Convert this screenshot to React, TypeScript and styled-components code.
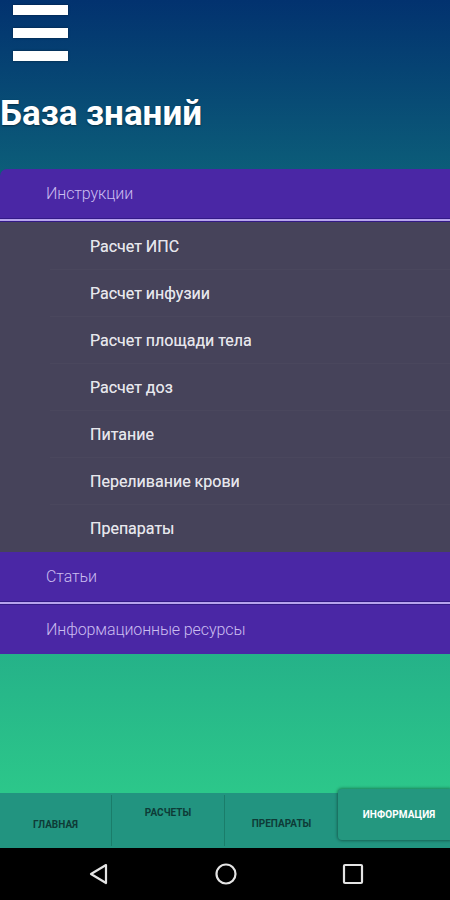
import React from "react";
import styled, { createGlobalStyle } from "styled-components";

const Global = createGlobalStyle`
  html, body { margin: 0; padding: 0; }
  body { font-family: Roboto, "Noto Sans", Arial, sans-serif; background: #000; }
  * { box-sizing: border-box; }
`;

const Screen = styled.div`
  width: 450px;
  height: 900px;
  display: flex;
  flex-direction: column;
  overflow: hidden;
  background: linear-gradient(180deg, #02326f 0%, #0c5d79 19%, #1d9987 55%, #2cc78a 88%, #2cc98a 100%);
`;

const Content = styled.div`
  flex: 1;
  display: flex;
  flex-direction: column;
  padding-top: 5px;
`;

const MenuButton = styled.div`
  margin-left: 13px;
  width: 55px;
  display: flex;
  flex-direction: column;
  gap: 13px;
`;

const MenuBar = styled.div`
  height: 10px;
  background: #ffffff;
  box-shadow: 0 0 2px rgba(0, 0, 0, 0.5);
`;

const Title = styled.h1`
  margin: 33px 0 0 0;
  font-family: Roboto, Arial, sans-serif;
  font-weight: 700;
  font-size: 35px;
  line-height: 40px;
  color: #ffffff;
  text-shadow: 0 1px 2px rgba(0, 0, 0, 0.45);
`;

const Accordion = styled.div`
  margin-top: 35px;
  display: flex;
  flex-direction: column;
  border-top-left-radius: 7px;
  overflow: hidden;
`;

const Header = styled.div`
  height: 49px;
  display: flex;
  align-items: center;
  padding-left: 46px;
  background: #4a27a5;
  color: #cbbdf0;
  font-family: Roboto, Arial, sans-serif;
  font-weight: 300;
  font-size: 16px;
  letter-spacing: -0.1px;
`;

const Divider = styled.div`
  height: 4px;
  background: linear-gradient(180deg, #331a86 0 25%, #b7a3ee 25% 75%, #331a86 75% 100%);
`;

const Panel = styled.div`
  background: #46435a;
  display: flex;
  flex-direction: column;
  padding-top: 1px;
`;

const Item = styled.div<{ $last?: boolean }>`
  height: 47px;
  margin-left: 50px;
  padding-left: 40px;
  display: flex;
  align-items: center;
  color: #e6e6ec;
  font-family: Roboto, Arial, sans-serif;
  font-weight: 400;
  font-size: 16px;
  text-shadow: 0 0 0.4px rgba(255, 255, 255, 0.6);
  border-bottom: 1px solid ${(p) => (p.$last ? "transparent" : "rgba(255,255,255,0.025)")};
`;

const TabBar = styled.div`
  position: relative;
  height: 55px;
  background: #229480;
  display: grid;
  grid-template-columns: 112px 113px 113px 112px;
  margin-top: 4px;
`;

const Tab = styled.div<{ $offset: number; $divider?: boolean }>`
  display: flex;
  justify-content: center;
  align-items: flex-start;
  padding-top: ${(p) => p.$offset}px;
  font-family: Roboto, Arial, sans-serif;
  font-weight: 700;
  font-size: 10px;
  color: #0e3b37;
  margin: 2px 0;
  border-right: ${(p) => (p.$divider ? "1px solid #1a7d6a" : "none")};
`;

const ActiveTab = styled.div`
  margin-top: -4px;
  margin-bottom: 8px;
  border-radius: 4px 0 0 4px;
  background: #24977f;
  box-shadow: 0 0 3px 1px rgba(0, 0, 0, 0.35);
  display: flex;
  justify-content: center;
  align-items: center;
  padding-left: 10px;
  font-family: Roboto, Arial, sans-serif;
  font-weight: 700;
  font-size: 10px;
  color: #ffffff;
  letter-spacing: 0.1px;
`;

const NavBar = styled.div`
  height: 52px;
  background: #000000;
  display: grid;
  grid-template-columns: 196px 60px 194px;
  align-items: center;
`;

const NavSlot = styled.div<{ $align: string }>`
  display: flex;
  justify-content: ${(p) => p.$align};
  align-items: center;
`;

const items = [
  "Расчет ИПС",
  "Расчет инфузии",
  "Расчет площади тела",
  "Расчет доз",
  "Питание",
  "Переливание крови",
  "Препараты",
];

export default function App() {
  return (
    <>
      <Global />
      <Screen>
        <Content>
          <MenuButton>
            <MenuBar />
            <MenuBar />
            <MenuBar />
          </MenuButton>
          <Title>База знаний</Title>
          <Accordion>
            <Header>Инструкции</Header>
            <Divider />
            <Panel>
              {items.map((t, i) => (
                <Item key={t} $last={i === items.length - 1}>
                  {t}
                </Item>
              ))}
            </Panel>
            <Header>Статьи</Header>
            <Divider />
            <Header>Информационные ресурсы</Header>
          </Accordion>
        </Content>
        <TabBar>
          <Tab $offset={24} $divider>
            ГЛАВНАЯ
          </Tab>
          <Tab $offset={12} $divider>
            РАСЧЕТЫ
          </Tab>
          <Tab $offset={23}>ПРЕПАРАТЫ</Tab>
          <ActiveTab>ИНФОРМАЦИЯ</ActiveTab>
        </TabBar>
        <NavBar>
          <NavSlot $align="flex-end">
            <svg width="22" height="22" viewBox="0 0 22 22" style={{ marginRight: 86 }}>
              <path d="M18 2 L3 11 L18 20 Z" fill="none" stroke="#e4e4e4" strokeWidth="2.2" strokeLinejoin="round" />
            </svg>
          </NavSlot>
          <NavSlot $align="center">
            <svg width="24" height="24" viewBox="0 0 24 24">
              <circle cx="12" cy="12" r="9.5" fill="none" stroke="#e4e4e4" strokeWidth="2.2" />
            </svg>
          </NavSlot>
          <NavSlot $align="flex-start">
            <svg width="22" height="22" viewBox="0 0 22 22" style={{ marginLeft: 86 }}>
              <rect x="2" y="2" width="18" height="18" rx="1" fill="none" stroke="#e4e4e4" strokeWidth="2.2" />
            </svg>
          </NavSlot>
        </NavBar>
      </Screen>
    </>
  );
}
